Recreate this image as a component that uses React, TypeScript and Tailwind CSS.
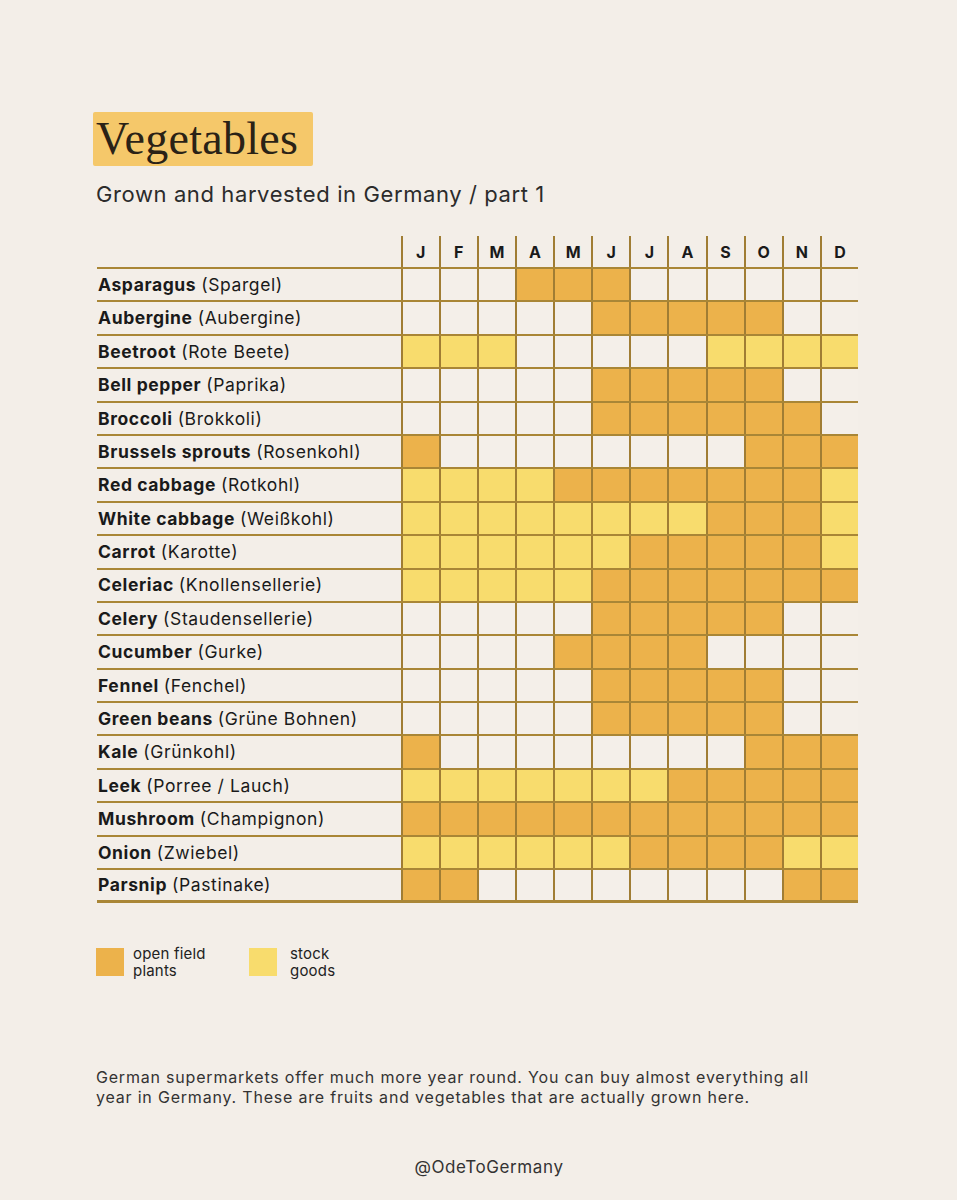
const MONTHS = ['J', 'F', 'M', 'A', 'M', 'J', 'J', 'A', 'S', 'O', 'N', 'D']

// O = open field plants, Y = stock goods, . = not available
const ROWS: [string, string, string][] = [
  ['Asparagus', 'Spargel', '...OOO......'],
  ['Aubergine', 'Aubergine', '.....OOOOO..'],
  ['Beetroot', 'Rote Beete', 'YYY.....YYYY'],
  ['Bell pepper', 'Paprika', '.....OOOOO..'],
  ['Broccoli', 'Brokkoli', '.....OOOOOO.'],
  ['Brussels sprouts', 'Rosenkohl', 'O........OOO'],
  ['Red cabbage', 'Rotkohl', 'YYYYOOOOOOOY'],
  ['White cabbage', 'Weißkohl', 'YYYYYYYYOOOY'],
  ['Carrot', 'Karotte', 'YYYYYYOOOOOY'],
  ['Celeriac', 'Knollensellerie', 'YYYYYOOOOOOO'],
  ['Celery', 'Staudensellerie', '.....OOOOO..'],
  ['Cucumber', 'Gurke', '....OOOO....'],
  ['Fennel', 'Fenchel', '.....OOOOO..'],
  ['Green beans', 'Grüne Bohnen', '.....OOOOO..'],
  ['Kale', 'Grünkohl', 'O........OOO'],
  ['Leek', 'Porree / Lauch', 'YYYYYYYOOOOO'],
  ['Mushroom', 'Champignon', 'OOOOOOOOOOOO'],
  ['Onion', 'Zwiebel', 'YYYYYYOOOOYY'],
  ['Parsnip', 'Pastinake', 'OO........OO'],
]

function cellClass(c: string) {
  if (c === 'O') return 'bg-[#ecb24b]'
  if (c === 'Y') return 'bg-[#f8dc6d]'
  return 'bg-[#f4efe9]'
}

export default function App() {
  return (
    <div
      className="h-[1200px] w-[957px] bg-[#f3eee8] pl-[93px] pt-[112px] text-[#1a1a1a]"
      style={{ fontFamily: 'Inter, "Noto Sans", sans-serif' }}
    >
      <h1
        className="inline-block rounded-[2px] bg-[#f5c86a] pl-[3px] pr-[15px] text-[46px] leading-[54px] tracking-[0.3px] text-[#2a2216]"
        style={{ fontFamily: '"Liberation Serif", serif' }}
      >
        Vegetables
      </h1>
      <p className="mt-[14px] pl-[3px] text-[22px] leading-[28px] tracking-[0.6px] text-[#2b2b2b]">
        Grown and harvested in Germany / part 1
      </p>

      <div className="mt-[28px] w-[765px] pl-[4px]">
        {/* month header */}
        <div className="flex h-[31px]">
          <div className="w-[304px]" />
          <div className="grid w-[458px] grid-cols-12">
            {MONTHS.map((m, i) => (
              <div key={i} className="flex items-center justify-center border-l-2 border-[#a07d34] text-[16px] font-bold">
                {m}
              </div>
            ))}
          </div>
        </div>

        {ROWS.map(([en, de, months], r) => (
          <div
            key={en}
            className={`flex h-[33.4px] border-t-2 border-[#a98636] ${r === ROWS.length - 1 ? 'h-[35.4px] border-b-[3px]' : ''}`}
          >
            <div className="flex w-[304px] items-center pl-[1px] text-[17.5px] leading-none tracking-[0.6px]">
              <span className="font-bold">{en}</span>
              <span className="ml-[5px]">({de})</span>
            </div>
            <div className="grid w-[458px] grid-cols-12">
              {months.split('').map((c, i) => (
                <div key={i} className={`border-l-2 border-[#a07d34] ${cellClass(c)}`} />
              ))}
            </div>
          </div>
        ))}
      </div>

      <div className="mt-[42px] flex items-center pl-[3px] text-[15px] leading-[17px] tracking-[0.2px] text-[#222]">
        <div className="h-[28px] w-[28px] bg-[#ecb24b]" />
        <div className="ml-[9px] w-[116px]">
          open field
          <br />
          plants
        </div>
        <div className="h-[28px] w-[28px] bg-[#f8dc6d]" />
        <div className="ml-[13px]">
          stock
          <br />
          goods
        </div>
      </div>

      <p className="mt-[88px] w-[750px] pl-[3px] text-[16px] leading-[20px] tracking-[0.8px] text-[#333]">
        German supermarkets offer much more year round. You can buy almost everything all year in Germany. These are fruits and vegetables that are actually grown here.
      </p>

      <p className="mt-[48px] w-[792px] text-center text-[17px] tracking-[0.6px] text-[#333]">
        @OdeToGermany
      </p>
    </div>
  )
}
